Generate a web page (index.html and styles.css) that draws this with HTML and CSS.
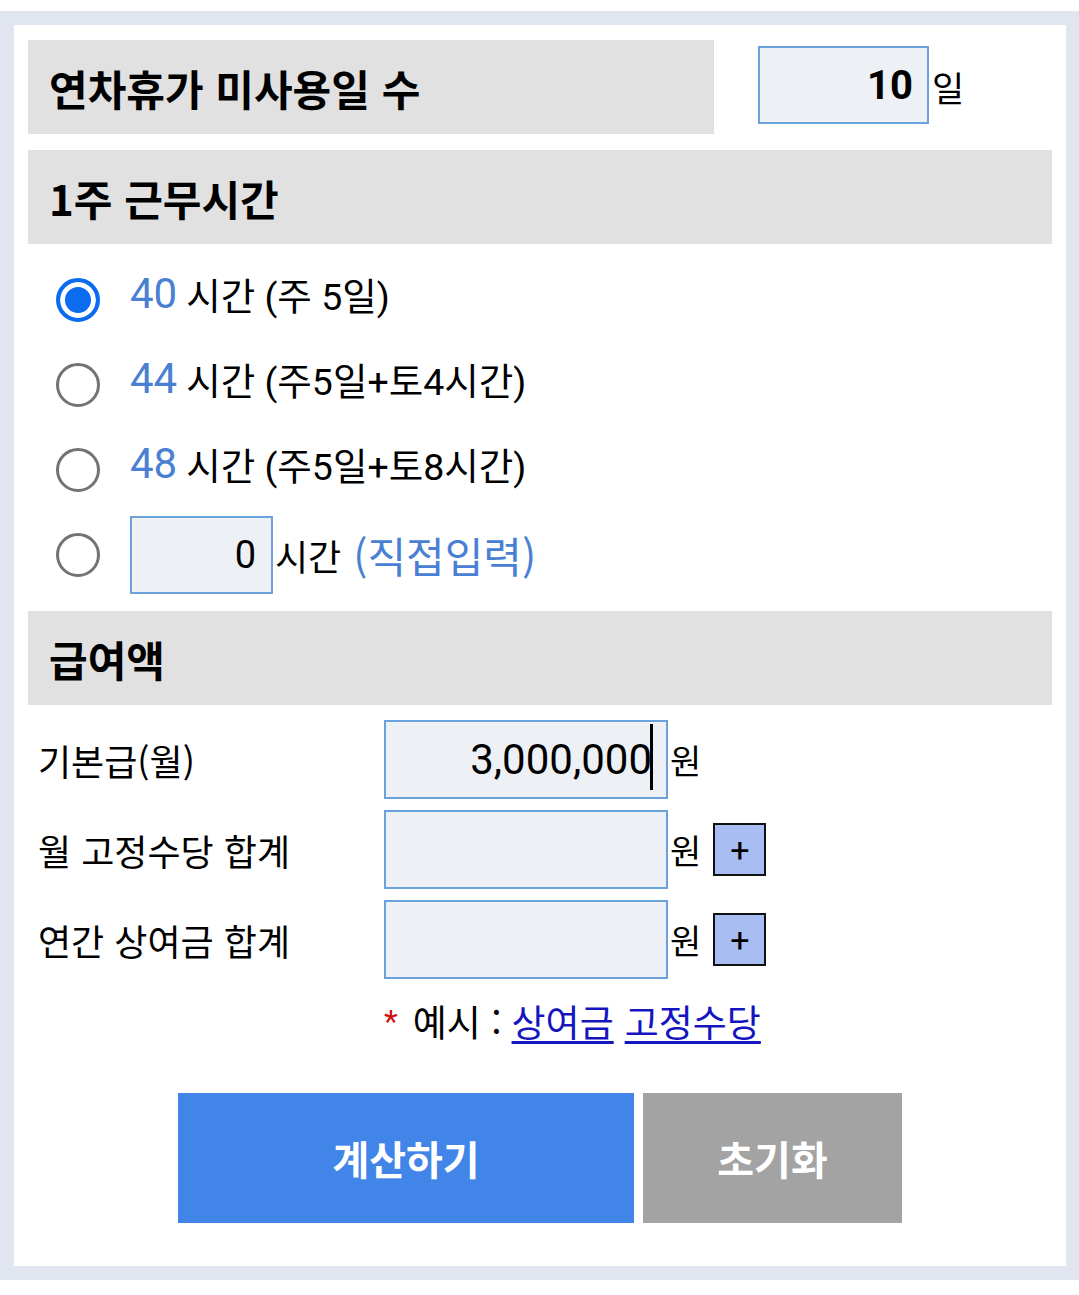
FILE: index.html
```html
<!DOCTYPE html>
<html lang="ko">
<head>
<meta charset="utf-8">
<title>연차수당 계산기</title>
<link rel="stylesheet" href="styles.css">
</head>
<body>
<div class="frame">
  <div class="inner">
    <div class="row-days">
      <div class="bar bar-short">연차휴가 미사용일 수</div>
      <input class="box box-days" type="text" value="10">
      <span class="unit unit-day">일</span>
    </div>

    <div class="bar">1주 근무시간</div>
    <div class="radios">
      <label class="radio-row">
        <input type="radio" name="hours" class="radio" checked>
        <span class="num">40</span><span class="txt">시간 (주 5일)</span>
      </label>
      <label class="radio-row">
        <input type="radio" name="hours" class="radio">
        <span class="num">44</span><span class="txt">시간 (주5일+토4시간)</span>
      </label>
      <label class="radio-row">
        <input type="radio" name="hours" class="radio">
        <span class="num">48</span><span class="txt">시간 (주5일+토8시간)</span>
      </label>
      <label class="radio-row">
        <input type="radio" name="hours" class="radio">
        <input class="box box-hours" type="text" value="0">
        <span class="txt txt-tight">시간</span><span class="direct">(직접입력)</span>
      </label>
    </div>

    <div class="bar">급여액</div>
    <div class="pay">
      <div class="pay-row">
        <span class="label">기본급(월)</span>
        <span class="field">
          <input class="box box-pay" type="text" value="3,000,000">
          <span class="caret"></span>
        </span>
        <span class="unit">원</span>
      </div>
      <div class="pay-row">
        <span class="label">월 고정수당 합계</span>
        <span class="field"><input class="box box-pay" type="text" value=""></span>
        <span class="unit">원</span>
        <button class="plus" type="button">+</button>
      </div>
      <div class="pay-row">
        <span class="label">연간 상여금 합계</span>
        <span class="field"><input class="box box-pay" type="text" value=""></span>
        <span class="unit">원</span>
        <button class="plus" type="button">+</button>
      </div>
      <div class="note">
        <span class="star">*</span><span class="note-txt">예시 :</span><a href="#" class="link">상여금</a><a href="#" class="link">고정수당</a>
      </div>
    </div>

    <div class="actions">
      <button class="btn btn-calc" type="button">계산하기</button>
      <button class="btn btn-reset" type="button">초기화</button>
    </div>
  </div>
</div>
</body>
</html>
```

FILE: styles.css
```css
html, body {
  margin: 0;
  padding: 0;
  background: #ffffff;
}

body {
  font-family: "Noto Sans CJK KR", sans-serif;
  color: #000;
}

.frame {
  margin-top: 11px;
  width: 1079px;
  box-sizing: border-box;
  border: 14px solid #e0e5f0;
  border-right-width: 13px;
  background: #fff;
}

.inner {
  padding: 15px 14px 43px 14px;
}

.bar {
  background: #e1e1e1;
  height: 94px;
  display: flex;
  align-items: center;
  padding-left: 21px;
  font-family: "Noto Sans CJK KR", sans-serif;
  font-weight: 700;
  font-size: 42px;
}

.row-days {
  display: flex;
  align-items: center;
  margin-bottom: 16px;
}

.bar-short {
  width: 686px;
  box-sizing: border-box;
  flex: none;
}

.box {
  box-sizing: border-box;
  border: 2px solid #6ba2dc;
  background: #edf0f5;
  text-align: right;
  font-family: Roboto, "Noto Sans CJK KR", sans-serif;
  color: #000;
  outline: none;
  margin: 0;
  border-radius: 0;
}

.box-days {
  margin-left: 44px;
  width: 171px;
  height: 78px;
  padding: 0 14px 0 0;
  font-size: 40px;
  font-weight: 700;
  margin-top: -4px;
}

.unit {
  font-family: "Noto Sans CJK KR", sans-serif;
  font-size: 34px;
  margin-left: 2px;
}

.unit-day {
  margin-left: 3px;
  margin-top: -2px;
  font-size: 35px;
}

.radios {
  padding: 13px 0 14px 0;
}

.radio-row {
  display: flex;
  align-items: center;
  height: 85px;
  padding-left: 28px;
}

.radio {
  appearance: none;
  -webkit-appearance: none;
  margin: 0 30px 0 0;
  width: 44px;
  height: 44px;
  border-radius: 50%;
  border: 3px solid #737373;
  box-sizing: border-box;
  background: #fff;
  flex: none;
}

.radio:checked {
  border: 4px solid #0b6cf0;
  background: #0b6cf0;
  box-shadow: inset 0 0 0 5px #fff;
}

.num {
  color: #4a80d4;
  font-family: Roboto, sans-serif;
  font-size: 42px;
  margin-right: 9px;
  line-height: 1;
  position: relative;
  top: -6px;
}

.txt {
  font-size: 37.5px;
  font-family: Roboto, "Noto Sans CJK KR", sans-serif;
}

.radio-row:nth-child(-n+3) .txt {
  position: relative;
  top: -6px;
}

.box-hours {
  width: 143px;
  height: 78px;
  padding: 0 15px 0 0;
  font-size: 38px;
  font-weight: 400;
  flex: none;
}

.txt-tight {
  margin-left: 2px;
  font-size: 36px;
}

.direct {
  color: #4a80d4;
  font-size: 42px;
  margin-left: 12px;
  font-family: "Noto Sans CJK KR", sans-serif;
}

.pay {
  padding: 15px 0 0 10px;
}

.pay-row {
  display: flex;
  align-items: center;
  height: 79px;
  margin-bottom: 11px;
}

.label {
  width: 346px;
  flex: none;
  font-size: 36px;
  font-family: "Noto Sans CJK KR", sans-serif;
}

.field {
  position: relative;
  display: block;
  flex: none;
}

.box-pay {
  display: block;
  width: 284px;
  height: 79px;
  padding: 0 14px 0 0;
  font-size: 42px;
}

.caret {
  position: absolute;
  right: 15px;
  top: 4px;
  width: 3px;
  height: 66px;
  background: #000;
}

.plus {
  margin-left: 12px;
  width: 53px;
  height: 53px;
  box-sizing: border-box;
  border: 2px solid #111;
  background: #a8bdf2;
  font-size: 34px;
  font-family: Roboto, sans-serif;
  line-height: 1;
  padding: 0;
  color: #000;
  display: flex;
  align-items: center;
  justify-content: center;
}

.note {
  margin-left: 346px;
  margin-top: 20px;
  display: flex;
  align-items: center;
  height: 44px;
  font-size: 37px;
  font-family: "Noto Sans CJK KR", sans-serif;
}

.star {
  color: #d01010;
  margin-right: 15px;
  font-size: 32px;
  font-family: Roboto, sans-serif;
}

.note-txt {
  margin-right: 10px;
}

.link {
  color: #1515c0;
  text-decoration: underline;
  text-underline-offset: 4px;
  margin-right: 11px;
}

.actions {
  display: flex;
  justify-content: center;
  gap: 9px;
  margin-top: 50px;
}

.btn {
  height: 130px;
  border: none;
  color: #fff;
  font-family: "Noto Sans CJK KR", sans-serif;
  font-weight: 700;
  font-size: 40px;
  padding: 0;
}

.btn-calc {
  width: 456px;
  background: #4285e8;
}

.btn-reset {
  width: 259px;
  background: #a3a3a3;
}
```
